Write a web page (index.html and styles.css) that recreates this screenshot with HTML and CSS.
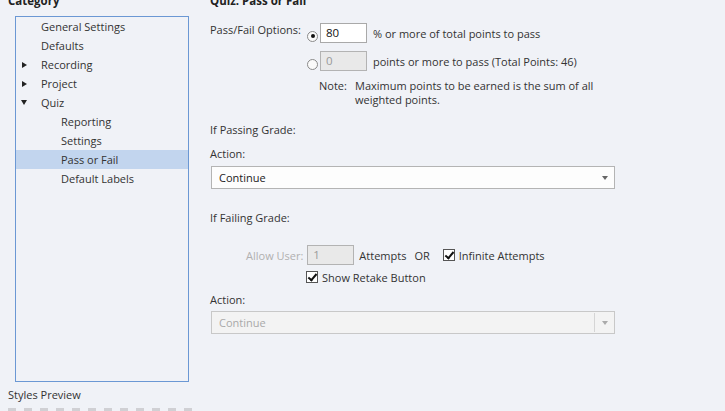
FILE: index.html
```html
<!DOCTYPE html>
<html>
<head>
<meta charset="utf-8">
<link rel="stylesheet" href="styles.css">
</head>
<body>
<div class="page">
  <div class="left">
    <div class="heading">Category</div>
    <div class="tree">
      <div class="row l1">General Settings</div>
      <div class="row l1">Defaults</div>
      <div class="row l1"><span class="tri right"></span>Recording</div>
      <div class="row l1"><span class="tri right"></span>Project</div>
      <div class="row l1"><span class="tri down"></span>Quiz</div>
      <div class="row l2">Reporting</div>
      <div class="row l2">Settings</div>
      <div class="row l2 sel">Pass or Fail</div>
      <div class="row l2">Default Labels</div>
    </div>
    <div class="preview">Styles Preview</div>
    <div class="dashes"></div>
  </div>
  <div class="right">
    <div class="heading">Quiz: Pass or Fail</div>
    <div class="opts">
      <div class="optlabel">Pass/Fail Options:</div>
      <div class="optrow first">
        <span class="radio on"></span>
        <span class="field">80</span>
        <span class="txt">% or more of total points to pass</span>
      </div>
      <div class="optrow">
        <span class="radio"></span>
        <span class="field dis">0</span>
        <span class="txt">points or more to pass (Total Points: 46)</span>
      </div>
      <div class="note">
        <span class="notelabel">Note:</span>
        <span class="notetext">Maximum points to be earned is the sum of all<br>weighted points.</span>
      </div>
    </div>
    <div class="section pass">If Passing Grade:</div>
    <div class="label">Action:</div>
    <div class="select"><span>Continue</span><span class="arrow"></span></div>
    <div class="section fail">If Failing Grade:</div>
    <div class="attempts">
      <span class="muted">Allow User:</span>
      <span class="field dis small">1</span>
      <span>Attempts</span>
      <span class="or">OR</span>
      <span class="check"></span>
      <span>Infinite Attempts</span>
    </div>
    <div class="retake"><span class="check"></span><span>Show Retake Button</span></div>
    <div class="label second">Action:</div>
    <div class="select dis"><span>Continue</span><span class="sep"></span><span class="arrow"></span></div>
  </div>
</div>
</body>
</html>
```
FILE: styles.css
```css
html, body {
  margin: 0;
  padding: 0;
  background: #f0f2f7;
  width: 725px;
  height: 411px;
  overflow: hidden;
}
body {
  font-family: "Open Sans", "Noto Sans", sans-serif;
  font-size: 11px;
  color: #333;
}
.page {
  display: flex;
  height: 411px;
}
.left {
  width: 202px;
  padding-left: 8px;
  box-sizing: border-box;
  display: flex;
  flex-direction: column;
}
.heading {
  font-weight: bold;
  font-size: 11.5px;
  color: #222;
  line-height: 14px;
  margin-top: -6px;
  height: 22px;
  flex-shrink: 0;
}
.tree {
  margin-left: 7px;
  width: 174px;
  height: 366px;
  flex-shrink: 0;
  box-sizing: border-box;
  border: 1px solid #6b98d4;
}
.row {
  height: 19px;
  line-height: 19px;
  display: flex;
  align-items: center;
  white-space: nowrap;
}
.row.l1 { padding-left: 25px; position: relative; }
.row.l2 { padding-left: 45px; }
.row.sel { background: #c2d5ee; }
.tri {
  position: absolute;
  left: 6px;
  width: 0;
  height: 0;
}
.tri.right {
  border-top: 3.5px solid transparent;
  border-bottom: 3.5px solid transparent;
  border-left: 5px solid #222;
}
.tri.down {
  border-left: 3.5px solid transparent;
  border-right: 3.5px solid transparent;
  border-top: 5px solid #222;
  left: 5px;
}
.preview {
  margin-top: 6px;
  line-height: 14px;
  color: #333;
  flex-shrink: 0;
}
.dashes {
  margin-top: 6px;
  width: 190px;
  height: 3px;
  flex-shrink: 0;
  background: repeating-linear-gradient(90deg, #d0d0d4 0 8px, transparent 8px 16px);
}
.right {
  flex: 1;
  padding-left: 8px;
}
.opts {
  position: relative;
  padding-top: 7px;
}
.optlabel {
  position: absolute;
  left: 0;
  top: 7px;
  line-height: 14px;
}
.optrow {
  display: flex;
  align-items: center;
  margin-left: 97px;
  height: 20px;
  margin-bottom: 8px;
}
.radio {
  width: 11px;
  height: 11px;
  box-sizing: border-box;
  border: 1px solid #8a8a8a;
  border-radius: 50%;
  background: #fafafa;
  margin-top: 6px;
  margin-right: 2px;
  display: flex;
  align-items: center;
  justify-content: center;
}
.radio.on::after {
  content: "";
  width: 4px;
  height: 4px;
  border-radius: 50%;
  background: #111;
}
.field {
  width: 47px;
  height: 20px;
  box-sizing: border-box;
  border: 1px solid #a9a9a9;
  background: #fff;
  padding-left: 5px;
  line-height: 18px;
  color: #111;
  font-size: 11.5px;
}
.field.dis {
  background: #e9e9e9;
  color: #9a9a9a;
  border-color: #b3b3b3;
}
.txt { margin-left: 6px; }
.note {
  display: flex;
  margin-left: 109px;
  margin-top: 0;
  line-height: 14px;
}
.notelabel { width: 36px; }
.section { line-height: 14px; }
.section.pass { margin-top: 16px; }
.label { line-height: 14px; margin-top: 10px; }
.select {
  margin-top: 5px;
  margin-left: 1px;
  width: 404px;
  height: 23px;
  box-sizing: border-box;
  border: 1px solid #b4b4b4;
  background: #fdfdfd;
  display: flex;
  align-items: center;
  padding-left: 7px;
  padding-right: 6px;
  color: #222;
}
.select span:first-child { flex: 1; }
.arrow {
  width: 0;
  height: 0;
  border-left: 3.5px solid transparent;
  border-right: 3.5px solid transparent;
  border-top: 4px solid #666;
}
.select.dis {
  background: #f3f3f3;
  color: #a9a9a9;
  border-color: #c8c8c8;
  margin-top: 4px;
}
.select.dis .arrow { border-top-color: #aaa; }
.sep {
  width: 1px;
  height: 19px;
  background: #d5d5d5;
  margin-right: 7px;
}
.section.fail { margin-top: 22px; }
.attempts {
  display: flex;
  align-items: center;
  margin-top: 20px;
  margin-left: 36px;
  height: 20px;
}
.muted { color: #b0b0b0; margin-right: 4px; }
.field.small { width: 47px; margin-right: 5px; }
.or { margin-left: 8px; margin-right: 13px; }
.check {
  width: 12px;
  height: 12px;
  box-sizing: border-box;
  border: 1px solid #555;
  background: #fff;
  margin-right: 4px;
  position: relative;
}
.check::after {
  content: "";
  position: absolute;
  left: 3px;
  top: 0px;
  width: 3px;
  height: 7px;
  border-right: 2px solid #111;
  border-bottom: 2px solid #111;
  transform: rotate(40deg);
}
.retake {
  display: flex;
  align-items: center;
  margin-left: 96px;
  margin-top: 5px;
  height: 14px;
}
.label.second { margin-top: 9px; }
```
